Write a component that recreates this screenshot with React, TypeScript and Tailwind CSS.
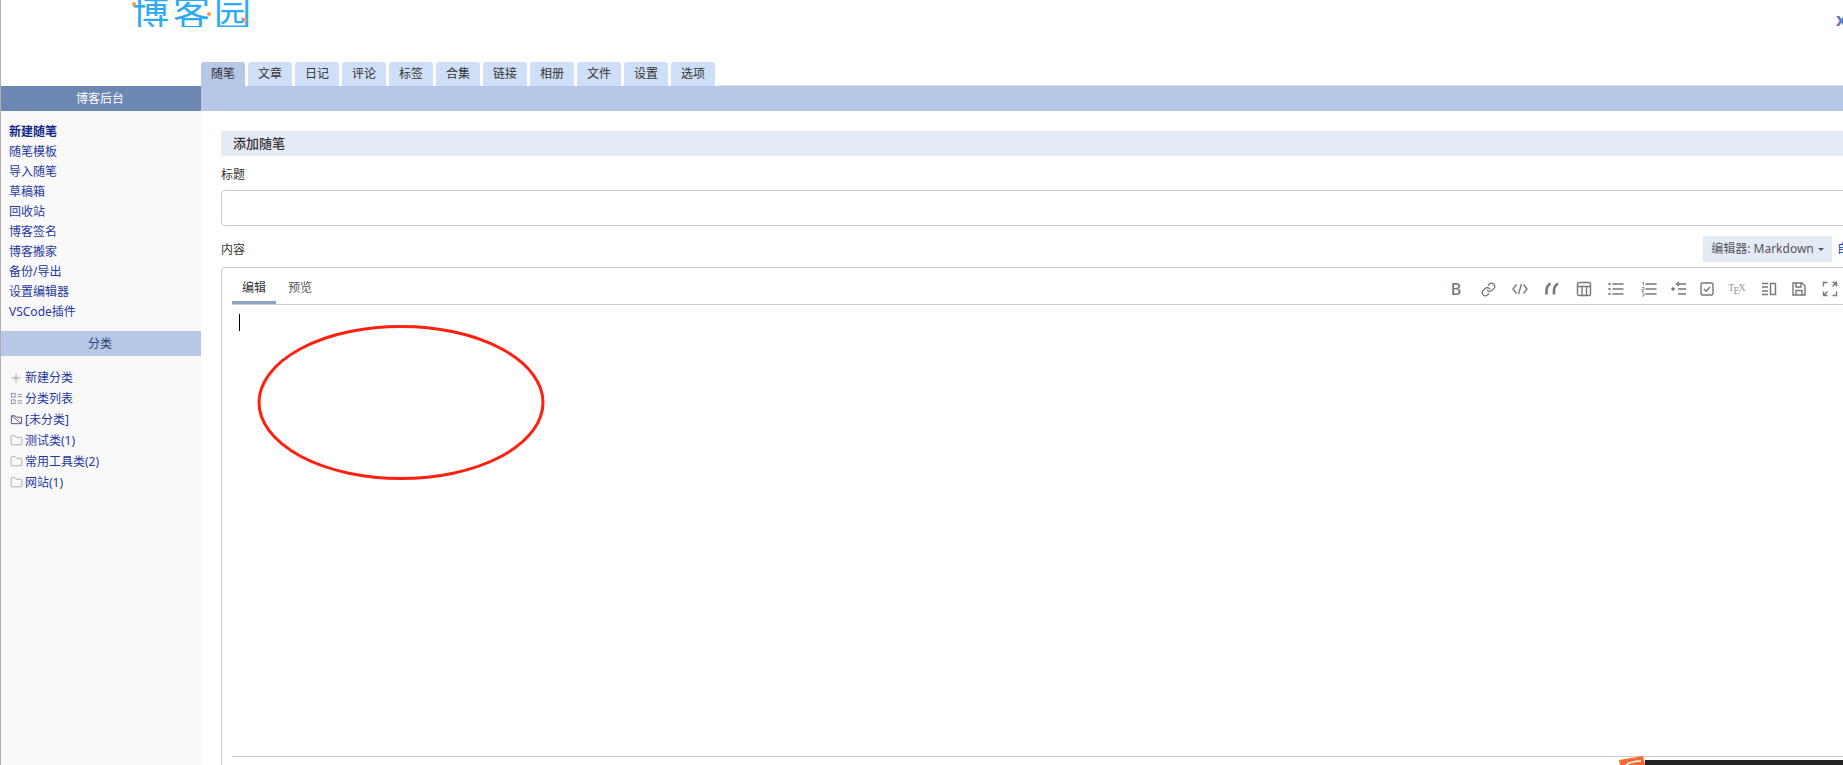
import { Plus, Link, Folder } from "lucide-react";
import { ReactNode } from "react";

const font = "font-['Noto_Sans','Noto_Sans_CJK_SC',sans-serif]";

const navTabs = ["随笔", "文章", "日记", "评论", "标签", "合集", "链接", "相册", "文件", "设置", "选项"];
const sideLinks = ["新建随笔", "随笔模板", "导入随笔", "草稿箱", "回收站", "博客签名", "博客搬家", "备份/导出", "设置编辑器", "VSCode插件"];

function Svg({ children }: { children: ReactNode }) {
  return (
    <svg width="16" height="16" viewBox="0 0 16 16" fill="none" stroke="#777" strokeWidth="1.4">
      {children}
    </svg>
  );
}

const tools: { w: string; icon: ReactNode }[] = [
  { w: "w-[32px]", icon: <span className="text-[16px] leading-none font-medium text-[#777]">B</span> },
  { w: "w-[32px]", icon: <Link size={15} color="#666" strokeWidth={1.8} /> },
  {
    w: "w-[32px]",
    icon: (
      <Svg>
        <path d="M4.500 3.500 1 8l3.500 4.500M11.500 3.500 15 8l-3.500 4.500M9.500 3 6.500 13" />
      </Svg>
    ),
  },
  {
    w: "w-[32px]",
    icon: (
      <Svg>
        <path d="M2.500 13.500V9.500C2.500 6.500 4 4 6.500 2.500M10 13.500V9.500C10 6.500 11.500 4 14 2.500" strokeWidth="2.600" />
      </Svg>
    ),
  },
  {
    w: "w-[32px]",
    icon: (
      <Svg>
        <rect x="1.500" y="1.500" width="13" height="13" rx="1.500" />
        <path d="M1.500 5.500h13M6 5.500v9M10.500 5.500v9" />
      </Svg>
    ),
  },
  {
    w: "w-[32px]",
    icon: (
      <Svg>
        <path d="M4.500 3h11M4.500 8h11M4.500 13h11" />
        <path d="M0.500 3h2M0.500 8h2M0.500 13h2" strokeWidth="2.200" />
      </Svg>
    ),
  },
  {
    w: "w-[33px]",
    icon: (
      <Svg>
        <path d="M4.500 3h11M4.500 8h11M4.500 13h11" />
        <path d="M1 1.500h1.500v3M1 6.500h2v2H1v2h2M1 12h2v3H1" strokeWidth="0.800" />
      </Svg>
    ),
  },
  {
    w: "w-[28px]",
    icon: (
      <Svg>
        <path d="M7 3h8M7 8h8M7 13h8M8 1 5.500 3 8 5" />
        <circle cx="2" cy="8" r="1.800" fill="#777" stroke="none" />
      </Svg>
    ),
  },
  {
    w: "w-[28px]",
    icon: (
      <Svg>
        <rect x="2" y="2" width="12" height="12" rx="1.500" />
        <path d="m5 8 2.200 2.200L11 6" />
      </Svg>
    ),
  },
  {
    w: "w-[32px]",
    icon: (
      <span className="font-['Liberation_Serif',serif] text-[10px] leading-none text-[#999] flex items-start">
        T<span className="mt-[3px] -ml-[1px]">E</span>
        <span className="-ml-[1px]">X</span>
      </span>
    ),
  },
  {
    w: "w-[32px]",
    icon: (
      <Svg>
        <path d="M1 2.500h6M1 6h6M1 10h6M1 13.500h6" />
        <rect x="9.500" y="2.500" width="5" height="11" />
      </Svg>
    ),
  },
  {
    w: "w-[28px]",
    icon: (
      <Svg>
        <path d="M2 2h9l3 3v9H2zM5 2v4h5V2M5 14V9.500h6V14" />
      </Svg>
    ),
  },
  {
    w: "w-[34px]",
    icon: (
      <Svg>
        <path d="M1.500 5.500V1.500h4M10.500 1.500h4v4M14.500 10.500v4h-4M5.500 14.500h-4v-4M1.500 14.500 5.500 10.500M14.500 1.500l-4 4" />
      </Svg>
    ),
  },
];

const sideIcons: { label: string; icon: ReactNode }[] = [
  { label: "新建分类", icon: <Plus size={14} color="#666a88" strokeWidth={1} /> },
  {
    label: "分类列表",
    icon: (
      <svg width="13" height="13" viewBox="0 0 14 14" fill="none" stroke="#8a8ca5" strokeWidth="1">
        <rect x="1.500" y="1.500" width="4" height="4" />
        <rect x="1.500" y="8.500" width="4" height="4" />
        <path d="M8 2.500h5M8 5h5M8 9.500h5M8 12h5" />
      </svg>
    ),
  },
  {
    label: "[未分类]",
    icon: (
      <svg width="13" height="13" viewBox="0 0 14 14" fill="none" stroke="#5c4a78" strokeWidth="1">
        <path d="M1.500 3h4l1 1.500h6v7h-11zM2 3l10 8.500" />
      </svg>
    ),
  },
  { label: "测试类(1)", icon: <Folder size={13} color="#6a6a8a" strokeWidth={1} /> },
  { label: "常用工具类(2)", icon: <Folder size={13} color="#6a6a8a" strokeWidth={1} /> },
  { label: "网站(1)", icon: <Folder size={13} color="#6a6a8a" strokeWidth={1} /> },
];

function Logo() {
  return (
    <div className="relative ml-[131px] w-[122px] h-[27px] overflow-hidden">
      <div className="absolute left-0 bottom-[-9px] whitespace-nowrap text-[37px] leading-[46px] tracking-[4px] font-normal text-[#2daaf5]">
        博客园
      </div>
      <span className="absolute left-0 top-[2px] w-[4px] h-[4px] rounded-full bg-[#ff9a3c]" />
      <span className="absolute left-[75px] top-[12px] w-[4px] h-[4px] rounded-full bg-[#ff9a3c]" />
      <span className="absolute left-[111px] top-[18px] w-[4px] h-[4px] rounded-full bg-[#ff9a3c]" />
    </div>
  );
}

function Sidebar() {
  return (
    <aside className="w-[200px] shrink-0 bg-[#f9f9f9]">
      <div className="h-[25px] bg-[#6d87b3] text-white text-[12px] flex items-center justify-center pr-[2px]">博客后台</div>
      <ul className="pt-[11px] pl-[8px] pb-[9px] text-[12px] text-[#1f3a9e]">
        {sideLinks.map((item, i) => (
          <li key={item} className={`h-[20px] leading-[20px] ${i === 0 ? "font-semibold text-[#10288a]" : ""}`}>
            {item}
          </li>
        ))}
      </ul>
      <div className="h-[25px] bg-[#b6c8e6] text-[#2a4478] text-[12px] flex items-center justify-center pr-[2px]">分类</div>
      <ul className="pt-[11px] pl-[8px] text-[12px] text-[#1f3a9e]">
        {sideIcons.map((item) => (
          <li key={item.label} className="h-[21px] flex items-center gap-[2px]">
            <span className="w-[14px] flex justify-center">{item.icon}</span>
            <span>{item.label}</span>
          </li>
        ))}
      </ul>
    </aside>
  );
}

function Editor() {
  return (
    <div className="border border-[#ccc] rounded-[4px] px-[10px] h-[600px]">
      <div className="h-[36px] flex items-end border-b border-[#ccc] box-content">
        <div className="w-[44px] h-[36px] border-b-[3px] border-[#8fa3c8] text-[12px] text-[#333] flex items-center justify-center pt-[6px]">
          编辑
        </div>
        <div className="pl-[12px] h-[36px] text-[12px] text-[#555] flex items-center pt-[3px]">预览</div>
        <div className="ml-auto flex h-[36px] items-center pr-[3px] pt-[6px]">
          {tools.map((tool, i) => (
            <div key={i} className={`${tool.w} flex justify-center items-center`}>
              {tool.icon}
            </div>
          ))}
        </div>
      </div>
      <div className="h-[452px] border-b border-[#ccc] pl-[7px] pt-[9px]">
        <div className="w-px h-[17px] bg-black" />
      </div>
    </div>
  );
}

export default function App() {
  return (
    <div className={`relative w-[1843px] h-[765px] overflow-hidden bg-white border-l border-[#b0b0b0] ${font}`}>
      <header className="h-[62px] flex items-start">
        <Logo />
        <span className="ml-auto mt-[9px] w-[7px] overflow-hidden text-[18px] font-bold text-[#5b7fc0] leading-[20px]">x</span>
      </header>

      <nav className="h-[24px] pl-[200px] flex gap-[3px] text-[12px] text-[#333]">
        {navTabs.map((tab, i) => (
          <div
            key={tab}
            className={`w-[44px] rounded-t-[3px] flex items-center justify-center ${i === 0 ? "bg-[#b6c8e6]" : "bg-[#cfdff7]"}`}
          >
            {tab}
          </div>
        ))}
        <div className="flex-1 self-end h-px bg-[#ddd]" />
      </nav>

      <div className="flex h-[679px]">
        <Sidebar />
        <main className="flex-1 min-w-0">
          <div className="h-[25px] bg-[#b6c8e6]" />
          <div className="pl-[20px] pt-[20px] w-[1660px]">
            <div className="h-[25px] bg-[#e4ebf5] pl-[12px] text-[13px] font-medium text-[#333] flex items-center">添加随笔</div>
            <div className="h-[34px] flex items-center pt-[4px] text-[12px] text-[#333]">标题</div>
            <div className="h-[36px] border border-[#ccc] rounded-[4px]" />
            <div className="h-[41px] pt-[10px] flex justify-between items-start">
              <span className="text-[12px] text-[#333] leading-[28px]">内容</span>
              <div className="w-[158px] flex gap-[5px] text-[12px] whitespace-nowrap">
                <div className="w-[129px] h-[26px] shrink-0 bg-[#e4ebf5] text-[#555] flex items-center justify-center gap-[4px]">
                  编辑器: Markdown
                  <span className="w-0 h-0 border-x-[3px] border-x-transparent border-t-[3px] border-t-[#555]" />
                </div>
                <span className="text-[#1040b0] leading-[26px]">自动保存</span>
              </div>
            </div>
            <Editor />
          </div>
        </main>
      </div>

      {/* red annotation drawn over the editor */}
      <svg className="absolute left-[255px] top-[324px]" width="290" height="157" viewBox="0 0 290 157" fill="none">
        <ellipse cx="145" cy="78.500" rx="142" ry="76" stroke="#ff2010" strokeWidth="3" />
      </svg>

      {/* floating bar cut off by the bottom edge */}
      <div className="absolute left-[1644px] top-[760px] w-[200px] h-[5px] bg-[#222]" />
      <svg className="absolute left-[1617px] top-[755px]" width="28" height="10" viewBox="0 0 28 10" fill="none">
        <path d="M1 5 25 1l2 9H2z" fill="#ff6a33" />
        <path d="M8 10c4-3 9-4 15-4" stroke="#fff" strokeWidth="1.500" />
      </svg>
    </div>
  );
}
